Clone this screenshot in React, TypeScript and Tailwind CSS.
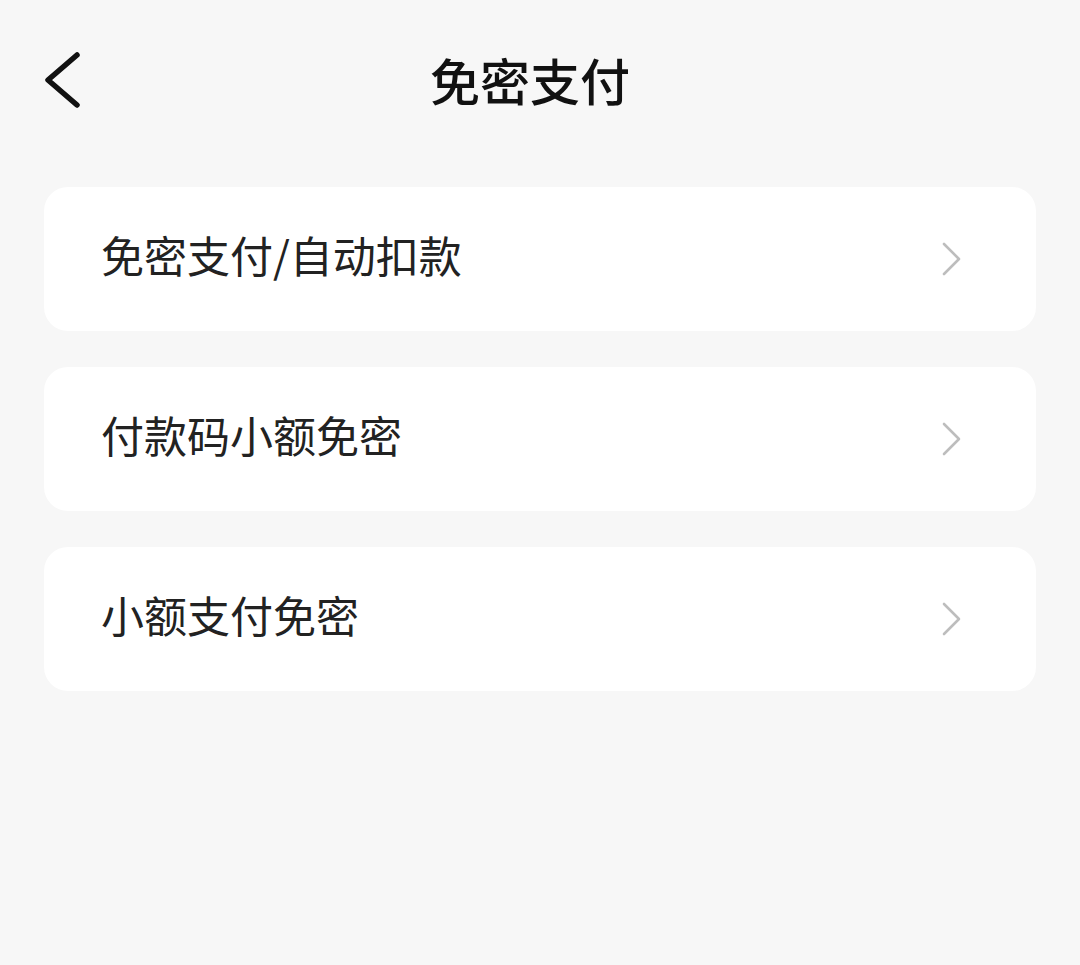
const items = ["免密支付/自动扣款", "付款码小额免密", "小额支付免密"];

function BackIcon() {
  return (
    <svg width="40" height="60" viewBox="0 0 40 60" fill="none" className="ml-[3px] mt-[2px]">
      <polyline
        points="34,5 5,30 34,55"
        stroke="#111"
        strokeWidth="5.5"
        strokeLinecap="round"
        strokeLinejoin="round"
      />
    </svg>
  );
}

function ArrowIcon() {
  return (
    <svg width="24" height="40" viewBox="0 0 24 40" fill="none">
      <polyline
        points="4,5 19,20 4,35"
        stroke="#bdbdbd"
        strokeWidth="2.6"
        strokeLinecap="round"
        strokeLinejoin="round"
      />
    </svg>
  );
}

export default function App() {
  return (
    <div
      className="min-h-[965px] w-full bg-[#f7f7f7]"
      style={{ fontFamily: '"Noto Sans CJK SC", "Noto Sans", sans-serif' }}
    >
      <div className="flex h-[164px] items-center px-[40px] pb-[6px]">
        <div className="flex w-[80px] items-center">
          <BackIcon />
        </div>
        <h1 className="flex-1 text-center text-[50px] font-medium leading-none text-[#111]">免密支付</h1>
        <div className="w-[100px]" />
      </div>

      <div className="flex flex-col gap-[36px] px-[44px] pt-[23px]">
        {items.map((label) => (
          <div
            key={label}
            className="flex h-[144px] items-center justify-between rounded-[24px] bg-white pl-[57px] pr-[72px]"
          >
            <span className="mb-[10px] text-[43px] leading-none text-[#222]">{label}</span>
            <ArrowIcon />
          </div>
        ))}
      </div>
    </div>
  );
}
